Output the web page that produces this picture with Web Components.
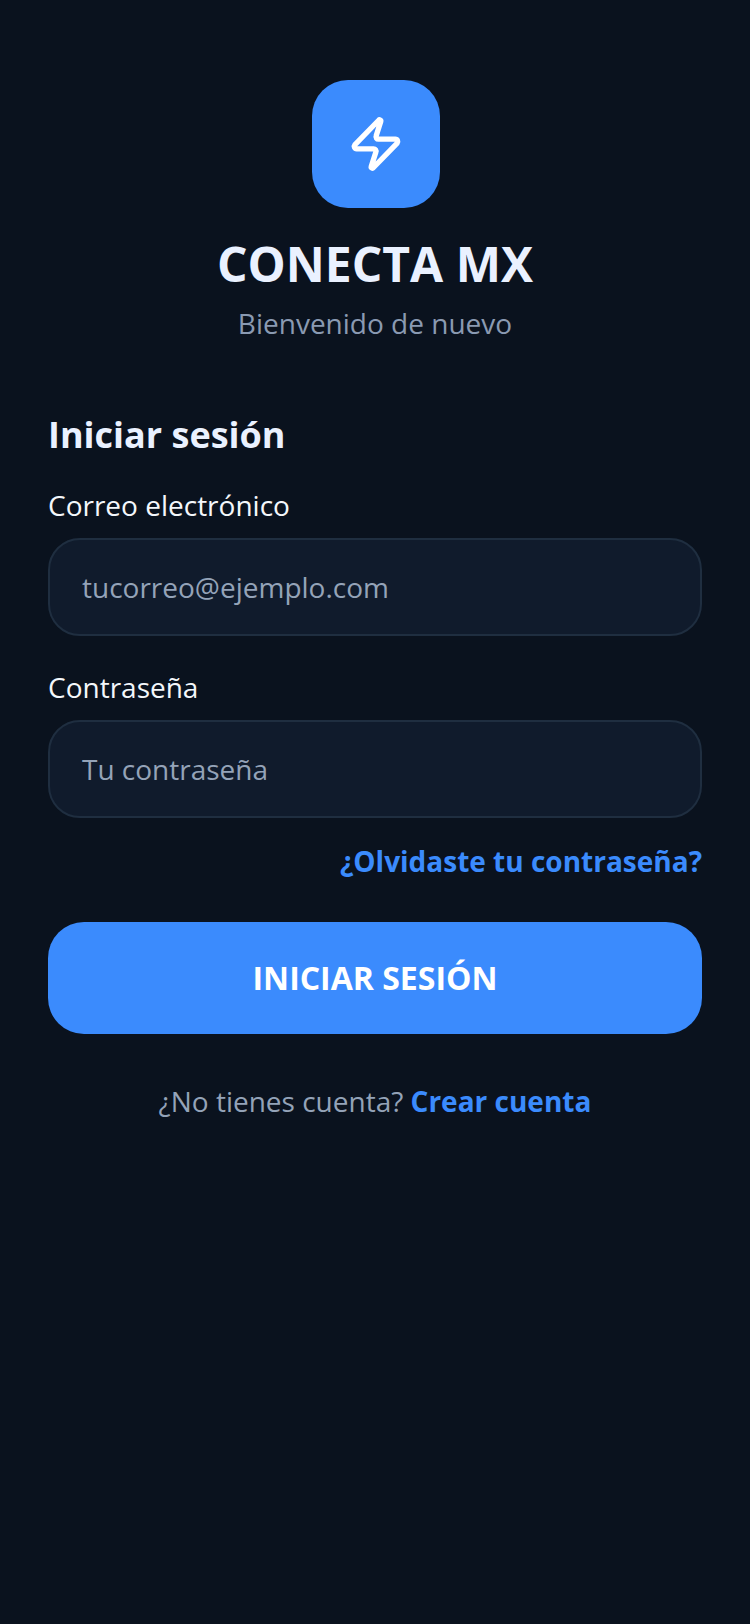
<!DOCTYPE html>
<html lang="es">
<head>
<meta charset="utf-8">
<title>Conecta MX</title>
<style>
    html, body {
        margin: 0;
        background: #0a121e;
        font-family: "Open Sans", sans-serif;
    }
</style>
</head>
<body>
<login-screen>
    <brand-header slot="header" name="CONECTA MX" tagline="Bienvenido de nuevo"></brand-header>
    <span slot="title">Iniciar sesión</span>
    <form-field label="Correo electrónico" placeholder="tucorreo@ejemplo.com"></form-field>
    <form-field label="Contraseña" placeholder="Tu contraseña"></form-field>
    <span slot="forgot">¿Olvidaste tu contraseña?</span>
    <primary-button slot="action">INICIAR SESIÓN</primary-button>
    <span slot="question">¿No tienes cuenta?</span>
    <span slot="link">Crear cuenta</span>
</login-screen>

<script>
class LoginScreen extends HTMLElement {
    constructor() {
        super();
        this.attachShadow({ mode: 'open' });
    }

    connectedCallback() {
        this.shadowRoot.innerHTML = `
        <style>
            :host {
                display: block;
                min-height: 1624px;
                box-sizing: border-box;
                padding: 80px 48px 0;
                background: #0a121e;
            }

            h2 {
                margin: 68px 0 0;
                font-size: 36px;
                line-height: 48px;
                font-weight: 700;
                color: #eaf1ff;
            }

            .fields {
                display: flex;
                flex-direction: column;
                gap: 31px;
                margin-top: 26px;
            }

            .forgot {
                margin-top: 23px;
                text-align: right;
                font-size: 28px;
                line-height: 40px;
                font-weight: 700;
                color: #3b8bfd;
            }

            .action {
                margin-top: 41px;
            }

            .footer {
                margin-top: 47px;
                text-align: center;
                font-size: 28px;
                line-height: 40px;
                color: #94a3b8;
            }

            .footer b {
                color: #3b8bfd;
                font-weight: 700;
            }
        </style>

        <slot name="header"></slot>
        <h2><slot name="title"></slot></h2>
        <div class="fields"><slot></slot></div>
        <div class="forgot"><slot name="forgot"></slot></div>
        <div class="action"><slot name="action"></slot></div>
        <div class="footer"><slot name="question"></slot> <b><slot name="link"></slot></b></div>
        `;
    }
}

class BrandHeader extends HTMLElement {
    constructor() {
        super();
        this.attachShadow({ mode: 'open' });
    }

    connectedCallback() {
        this.shadowRoot.innerHTML = `
        <style>
            :host {
                display: flex;
                flex-direction: column;
                align-items: center;
            }

            .logo {
                width: 128px;
                height: 128px;
                margin-left: 2px;
                border-radius: 36px;
                background: #3b8bfd;
                display: flex;
                align-items: center;
                justify-content: center;
            }

            svg {
                display: block;
            }

            h1 {
                margin: 24px 0 0;
                font-size: 48px;
                line-height: 64px;
                font-weight: 700;
                color: #eaf1ff;
            }

            p {
                margin: 7px 0 0;
                font-size: 28px;
                line-height: 40px;
                color: #8a9ab2;
            }
        </style>

        <div class="logo">
            <svg width="58" height="58" viewBox="0 0 24 24" fill="none" stroke="#fff" stroke-width="2.2" stroke-linecap="round" stroke-linejoin="round">
                <path d="M4 14a1 1 0 0 1-.78-1.63l9.9-10.2a.5.5 0 0 1 .86.46l-1.92 6.02A1 1 0 0 0 13 10h7a1 1 0 0 1 .78 1.63l-9.9 10.2a.5.5 0 0 1-.86-.46l1.92-6.02A1 1 0 0 0 11 14z"/>
            </svg>
        </div>
        <h1>${this.getAttribute('name')}</h1>
        <p>${this.getAttribute('tagline')}</p>
        `;
    }
}

class FormField extends HTMLElement {
    constructor() {
        super();
        this.attachShadow({ mode: 'open' });
    }

    connectedCallback() {
        this.shadowRoot.innerHTML = `
        <style>
            :host {
                display: block;
            }

            label {
                display: block;
                margin-bottom: 13px;
                font-size: 28px;
                line-height: 40px;
                color: #f4f7fb;
            }

            .input {
                box-sizing: border-box;
                height: 98px;
                padding: 0 32px;
                display: flex;
                align-items: center;
                border: 2px solid #1f2e40;
                border-radius: 32px;
                background: #101b2c;
                font-size: 28px;
                color: #94a3b8;
            }
        </style>

        <label>${this.getAttribute('label')}</label>
        <div class="input">${this.getAttribute('placeholder')}</div>
        `;
    }
}

class PrimaryButton extends HTMLElement {
    constructor() {
        super();
        this.attachShadow({ mode: 'open' });
    }

    connectedCallback() {
        this.shadowRoot.innerHTML = `
        <style>
            :host {
                display: flex;
                align-items: center;
                justify-content: center;
                box-sizing: border-box;
                height: 112px;
                padding-bottom: 2px;
                border-radius: 36px;
                background: #3b8bfd;
                font-size: 32px;
                font-weight: 700;
                color: #fff;
            }
        </style>
        <slot></slot>
        `;
    }
}

customElements.define('login-screen', LoginScreen);
customElements.define('brand-header', BrandHeader);
customElements.define('form-field', FormField);
customElements.define('primary-button', PrimaryButton);
</script>
</body>
</html>
